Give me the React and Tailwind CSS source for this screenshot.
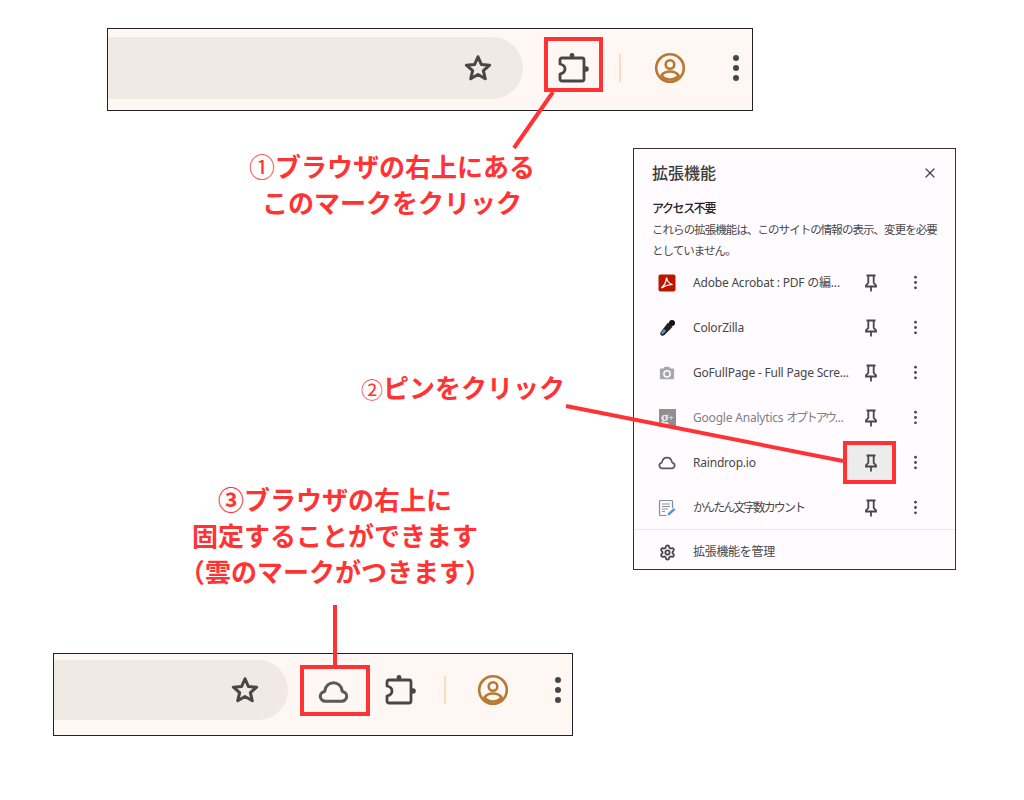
import React from "react";
import { X, Settings } from "lucide-react";

const JP = "font-['Noto_Sans','Noto_Sans_CJK_JP',sans-serif]";

function Star({ className }) {
  return (
    <svg viewBox="0 0 28 28" className={className} fill="none" stroke="#474747" strokeWidth="2.800" strokeLinejoin="round">
      <path d="M14 3.500l3.100 7.200 7.800.7-5.900 5.100 1.800 7.600-6.800-4-6.800 4 1.800-7.600-5.900-5.100 7.800-.7z" />
    </svg>
  );
}

function Puzzle({ className }) {
  return (
    <svg viewBox="0 0 34 34" className={className} fill="none" stroke="#474747" strokeWidth="2.800" strokeLinejoin="round">
      <path d="M5 7H25a2 2 0 0 1 2 2v19a2 2 0 0 1-2 2H5a2 2 0 0 1-2-2v-5c3-.7 5-2.800 5-5s-2-4.300-5-5V9a2 2 0 0 1 2-2z" />
      <circle cx="15" cy="4.500" r="2.400" fill="#474747" stroke="none" />
      <circle cx="29" cy="18" r="2.800" fill="#474747" stroke="none" />
    </svg>
  );
}

function Avatar({ className }) {
  return (
    <svg viewBox="0 0 32 32" className={className} fill="none" stroke="#b87a33" strokeWidth="2.600">
      <circle cx="16" cy="16" r="13.800" />
      <circle cx="16" cy="12.500" r="4.300" />
      <path d="M7.500 23.500c1.800-3 5-4 8.500-4s6.700 1 8.500 4c-2 2.600-5 4-8.500 4s-6.500-1.400-8.500-4z" />
    </svg>
  );
}

function Dots({ className, r = 2.600, color = "#474747" }) {
  return (
    <svg viewBox="0 0 8 28" className={className} fill={color}>
      <circle cx="4" cy="4" r={r} />
      <circle cx="4" cy="14" r={r} />
      <circle cx="4" cy="24" r={r} />
    </svg>
  );
}

function Cloud({ className, color = "#5a5a5a", w = 3.200 }) {
  return (
    <svg viewBox="0 0 32 24" className={className} fill="none" stroke={color} strokeWidth={w} strokeLinejoin="round">
      <path d="M7.500 21.500h17a5 5 0 0 0 1.500-9.800c-.6-.2-1-.5-1.100-1.100C24 5.800 20.500 2.500 16 2.500S8 5.800 7.100 10.600c-.1.600-.5.900-1.100 1.100a5 5 0 0 0 1.500 9.800z" />
    </svg>
  );
}

function Pin() {
  return (
    <svg viewBox="0 0 12 18" className="w-[12px] h-[18px]" fill="none" stroke="#474747" strokeWidth="1.800">
      <path d="M1.500 1.500h9M3.300 1.500v7.500L1 11.300v1.200h10v-1.200L8.700 9V1.500M6 12.500V17.500" />
    </svg>
  );
}

function Toolbar({ className, omni, children }) {
  return (
    <div className={`absolute flex items-center border border-[#222] bg-[#fff7f3] ${className}`}>
      <div className={`flex items-center justify-end bg-[#f1e9e3] ${omni}`}>
        <Star className="w-[30px] h-[30px]" />
      </div>
      {children}
    </div>
  );
}

const iconAdobe = (
  <svg viewBox="0 0 18 18" className="w-[18px] h-[18px]">
    <rect x="0.500" y="0.500" width="17" height="17" rx="2" fill="#b81800" />
    <path d="M8.500 3.500c0 3.500-2 7.500-5 10.500M8.500 3.500c.5 3 2.500 6 6 7.200-3.500-.4-7.500.8-11 3.300" fill="none" stroke="#fff" strokeWidth="1.300" />
  </svg>
);
const iconDropper = (
  <svg viewBox="0 0 18 18" className="w-[18px] h-[18px]">
    <path d="M10 3.500l4.500 4.500-8 8c-1 .8-2.500 1-3.500.2-1-1-.8-2.500 0-3.500z" fill="#222" />
    <path d="M6 10l2 2-3.500 3.500-1.500-1.500z" fill="#5b8fd0" />
    <circle cx="14" cy="4" r="3" fill="#111" />
  </svg>
);
const iconCamera = (
  <svg viewBox="0 0 18 18" className="w-[16px] h-[16px]">
    <path d="M1 5a1 1 0 0 1 1-1h3l1.500-2h5L13 4h3a1 1 0 0 1 1 1v10a1 1 0 0 1-1 1H2a1 1 0 0 1-1-1z" fill="#a8a8a8" />
    <circle cx="9" cy="10" r="3.500" fill="none" stroke="#fff" strokeWidth="1.600" />
  </svg>
);
const iconGoogle = (
  <div className="w-[17px] h-[18px] bg-[#8f8f8f] flex items-center justify-center overflow-hidden">
    <span className="text-[16px] font-bold leading-none text-[#e8e8e8] font-['Liberation_Serif',serif]">g</span>
    <span className="text-[8px] font-bold leading-none text-[#d8d8d8]">+</span>
  </div>
);
const iconDoc = (
  <svg viewBox="0 0 18 18" className="w-[18px] h-[18px]" fill="none">
    <path d="M14.500 9V2.500a1 1 0 0 0-1-1h-11a1 1 0 0 0-1 1v13a1 1 0 0 0 1 1h6" stroke="#7d8da3" strokeWidth="1.200" />
    <path d="M4 5h8M4 7.500h8M4 10h6M4 12.500h3" stroke="#8d8d8d" strokeWidth="1" />
    <path d="M9.500 16.500l.7-2.500 5.500-5 1.800 1.800-5.500 5z" fill="#4a9ad8" />
  </svg>
);

const rows = [
  { icon: iconAdobe, name: "Adobe Acrobat : PDF の編...", track: "tracking-[-0.2px]" },
  { icon: iconDropper, name: "ColorZilla", track: "tracking-[-0.2px]" },
  { icon: iconCamera, name: "GoFullPage - Full Page Scre...", track: "tracking-[-0.2px]" },
  { icon: iconGoogle, name: <>Google Analytics <span className="tracking-[-2.300px]">オプトアウ</span>...</>, dim: true, track: "tracking-[-0.2px]" },
  { icon: <Cloud className="w-[18px] h-[14px]" w={3} />, name: "Raindrop.io", active: true, track: "tracking-[-0.2px]" },
  { icon: iconDoc, name: "かんたん文字数カウント", track: "tracking-[-1.900px]" },
];

function Row({ icon, name, dim, active, track }) {
  return (
    <div className="flex items-center h-[45px] pl-[23px] pr-[37px]">
      <div className="w-[20px] flex justify-center shrink-0">{icon}</div>
      <div className={`ml-[16px] w-[150px] text-[12px] whitespace-nowrap ${track} ${dim ? "text-[#808080]" : "text-[#474747]"}`}>{name}</div>
      <div className="ml-[2px] w-[52px] flex justify-center shrink-0">
        {active ? (
          <div className="w-[53px] h-[43px] shrink-0 -ml-[3px] pl-[3px] flex items-center justify-center border-[4px] border-[#ff3333] bg-[#ececec]"><Pin /></div>
        ) : <Pin />}
      </div>
      <div className="ml-auto w-[6px] flex justify-center">
        <Dots className="w-[5px] h-[15px]" />
      </div>
    </div>
  );
}

function Caption({ className, children }) {
  return (
    <div className={`absolute text-center text-[26px] leading-[36px] font-bold text-[#ff3333] whitespace-nowrap ${JP} ${className}`}>{children}</div>
  );
}

export default function App() {
  return (
    <div className={`relative w-[1024px] h-[800px] bg-white overflow-hidden ${JP}`}>
      <Toolbar className="left-[107px] top-[28px] w-[646px] h-[83px] pb-[3px]" omni="w-[415px] h-[62px] rounded-r-[31px] pr-[30px]">
        <div className="ml-[21px] mb-[7px] w-[59px] h-[55px] flex items-center justify-center border-[4px] border-[#ff3333]">
          <Puzzle className="w-[34px] h-[34px] mt-[7px]" />
        </div>
        <div className="ml-[16px] w-[2px] h-[28px] bg-[#fbdcbc]" />
        <Avatar className="ml-[33px] w-[32px] h-[32px]" />
        <Dots className="ml-[46px] w-[8px] h-[28px]" r={3} />
      </Toolbar>

      <Caption className="left-[192px] w-[400px] top-[149px]">
        <div><span className="font-normal">①</span>ブラウザの右上にある</div>
        <div>このマークをクリック</div>
      </Caption>

      <div className="absolute left-[633px] top-[148px] w-[323px] h-[422px] border border-[#333] bg-[#fffbff] overflow-hidden">
        <div className="flex items-center justify-between h-[47px] pl-[18px] pr-[17px]">
          <div className="text-[16px] font-medium text-[#3c3c3c] leading-none">拡張機能</div>
          <X className="w-[16px] h-[16px] text-[#474747]" strokeWidth={1.800} />
        </div>
        <div className="pl-[18px] pr-[14px] pt-[3px]">
          <div className="text-[12px] leading-[20px] font-medium text-[#222] tracking-[-1.400px]">アクセス不要</div>
          <div className="text-[11.500px] leading-[21px] text-[#474747] tracking-[-0.950px] whitespace-nowrap">
            <div>これらの拡張機能は、このサイトの情報の表示、変更を必要</div>
            <div>としていません。</div>
          </div>
        </div>
        <div className="-mt-[1px]">
          {rows.map((r, i) => <Row key={i} {...r} />)}
        </div>
        <div className="h-[1px] bg-[#fce6cf] mt-[-1px]" />
        <div className="flex items-center h-[44px] pl-[23px]">
          <div className="w-[20px] flex justify-center shrink-0">
            <Settings className="w-[17px] h-[17px] text-[#474747]" strokeWidth={2.600} />
          </div>
          <div className="ml-[16px] text-[12px] text-[#474747] tracking-[-0.3px]">拡張機能を管理</div>
        </div>
      </div>

      <Caption className="left-[361px] top-[370px]"><span className="font-normal text-[22px]">②</span>ピンをクリック</Caption>

      <Caption className="left-[135px] w-[400px] top-[482px]">
        <div>③ブラウザの右上に</div>
        <div>固定することができます</div>
        <div>（雲のマークがつきます）</div>
      </Caption>

      <Toolbar className="left-[53px] top-[653px] w-[520px] h-[83px] pb-[9px]" omni="w-[234px] h-[60px] rounded-r-[30px] pr-[28px]">
        <div className="ml-[12px] w-[70px] h-[51px] flex items-center justify-center border-[4px] border-[#ff3333]">
          <Cloud className="w-[31px] h-[24px] mt-[3px] -ml-[3px]" />
        </div>
        <Puzzle className="ml-[14px] w-[34px] h-[34px]" />
        <div className="ml-[26px] w-[2px] h-[28px] bg-[#fbdcbc]" />
        <Avatar className="ml-[31px] w-[32px] h-[32px]" />
        <Dots className="ml-[45px] w-[8px] h-[28px]" r={3} />
      </Toolbar>

      <svg className="absolute inset-0 w-[1024px] h-[800px] pointer-events-none" viewBox="0 0 1024 800" fill="none" stroke="#ff3333" strokeWidth="4">
        <path d="M553 92L514 148" />
        <path d="M566 406L843 461" />
        <path d="M335 605V665" />
      </svg>
    </div>
  );
}
